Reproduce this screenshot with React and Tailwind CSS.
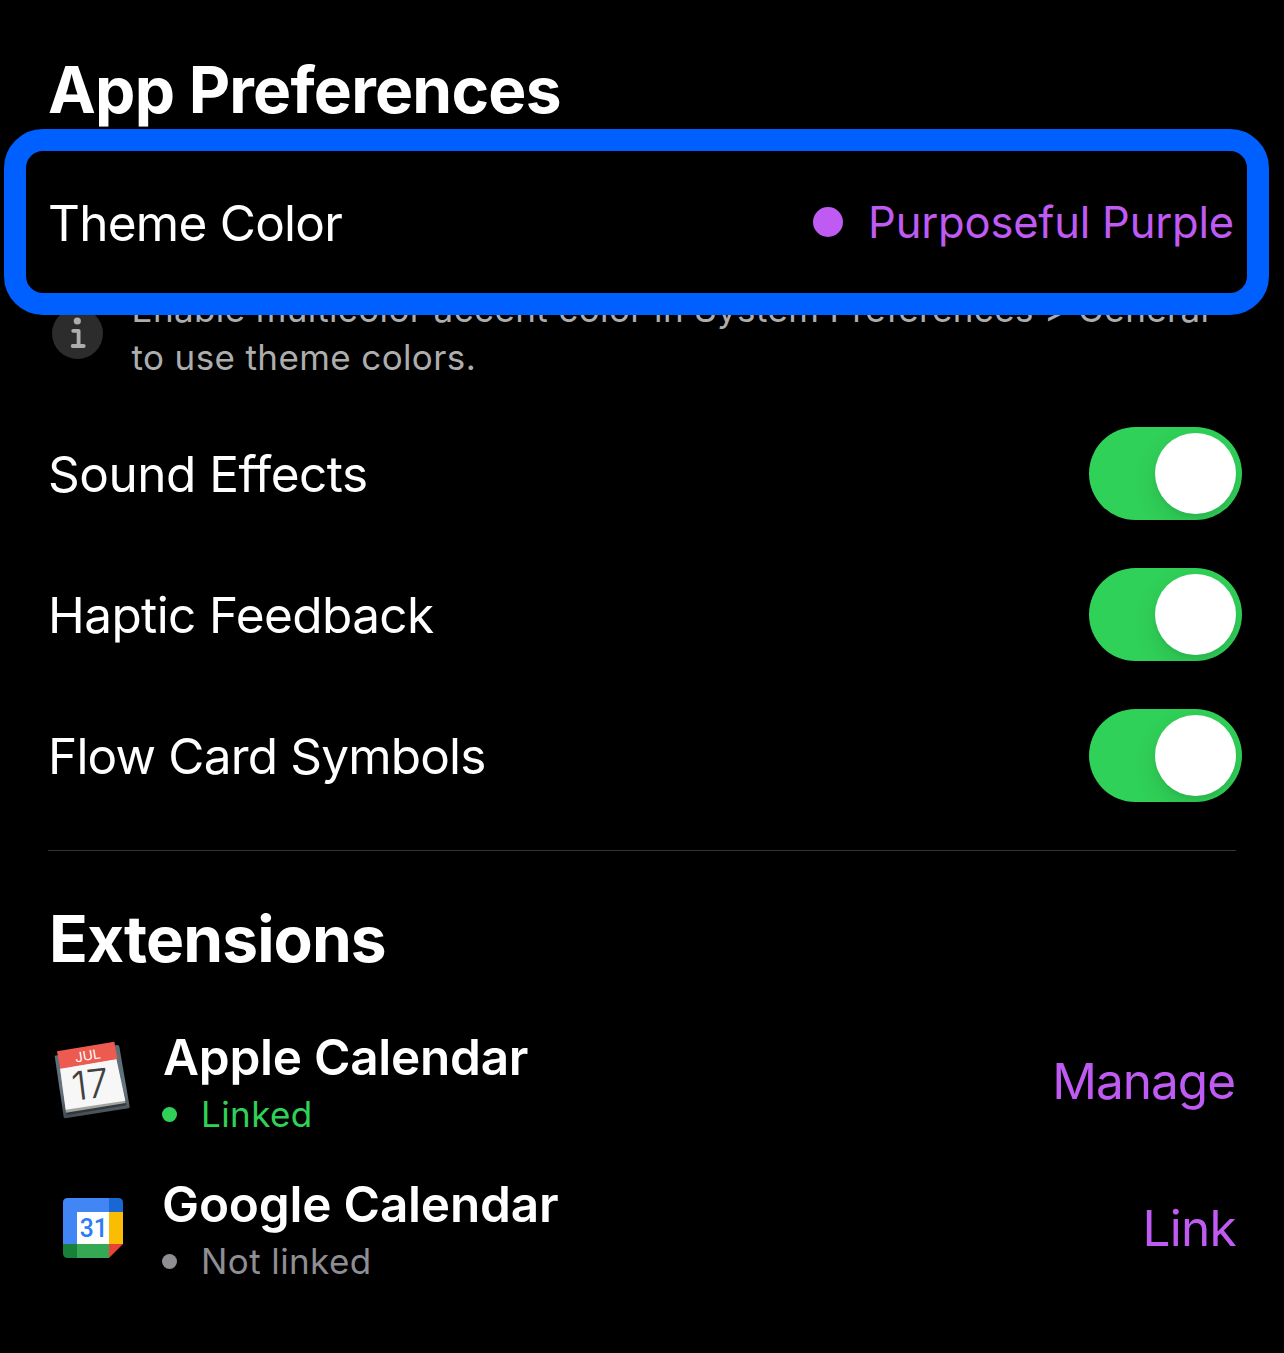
import React from "react";

function Toggle() {
  return (
    <button
      type="button"
      role="switch"
      aria-checked="true"
      className="-mr-1.5 flex h-[93px] w-[153px] items-center justify-end overflow-hidden rounded-full bg-[#30d158] pr-1.5"
    >
      <span className="size-[81px] rounded-full bg-white shadow-[0_9px_24px_rgba(0,0,0,0.12),0_3px_3px_rgba(0,0,0,0.04)]" />
    </button>
  );
}

function ToggleRow({ label, tracking }) {
  return (
    <div className="flex h-[141px] items-center justify-between">
      <span className={`pt-0.5 text-[49.5px] ${tracking}`}>{label}</span>
      <Toggle />
    </div>
  );
}

function InfoIcon() {
  return (
    <svg viewBox="0 0 51 51" className="ml-1 mt-[23px] size-[51px] shrink-0">
      <circle cx="25.5" cy="25.5" r="25.5" fill="#2c2c2c" />
      <circle cx="25.3" cy="13" r="3.6" fill="#adadad" />
      <path d="M21.2 22.8H26.6V38M20.7 38H31.7" fill="none" stroke="#adadad" strokeWidth="3.8" strokeLinecap="round" strokeLinejoin="round" />
    </svg>
  );
}

function AppleCalendarIcon() {
  return (
    <svg viewBox="36 64 240 240" className="size-20 shrink-0">
      <defs>
        <linearGradient id="board" x1="0" y1="0" x2="0" y2="1">
          <stop offset="0" stopColor="#5a6a74" />
          <stop offset="0.6" stopColor="#667681" />
          <stop offset="1" stopColor="#414b52" />
        </linearGradient>
      </defs>
      <path d="M44 108L231 76Q237 75 238 81L269 261Q269 265 265 266L76 296Q72 296 71 292Z" fill="url(#board)" />
      <path d="M60 148L229 118L259 257L79 287Z" fill="#34383b" />
      <path d="M60 148L229 118L257 250L78 279Z" fill="#a3a3a0" />
      <path d="M60 146L229 117L256 243L77 270Z" fill="#f7f7f7" />
      <path d="M51 95L223 66L232 118L61 147Z" fill="#ec5a50" />
      <g transform="rotate(-9.6 143 107)">
        <text x="143" y="122" textAnchor="middle" fontSize="40" textLength="78" lengthAdjust="spacingAndGlyphs" fill="#fff" className="font-['Inter'] font-normal">JUL</text>
      </g>
      <g transform="rotate(-7 149 193)">
        <text x="151" y="237" textAnchor="middle" fontSize="119" textLength="112" lengthAdjust="spacingAndGlyphs" fill="#414141" className="font-['Inter'] font-light">17</text>
      </g>
    </svg>
  );
}

function GoogleCalendarIcon() {
  return (
    <svg viewBox="0 0 180 180" className="mb-px ml-[11px] size-[60px] shrink-0">
      <path d="M14 0H138V42H42V138H0V14Q0 0 14 0Z" fill="#4285f4" />
      <path d="M138 0H166Q180 0 180 14V42H138Z" fill="#1967d2" />
      <path d="M138 42H180V138H138Z" fill="#fbbc04" />
      <path d="M42 138H138V180H42Z" fill="#34a853" />
      <path d="M0 138H42V180H14Q0 180 0 166Z" fill="#188038" />
      <path d="M138 138H180L138 180Z" fill="#ea4335" />
      <path d="M42 42H138V138H42Z" fill="#fff" />
      <text x="92" y="118" textAnchor="middle" fontSize="76" textLength="84" lengthAdjust="spacingAndGlyphs" fill="#2b7df5" className="font-['Roboto'] font-medium">31</text>
    </svg>
  );
}

function ExtensionRow({ icon, name, nameClass, status, dotClass, statusClass, action, actionClass }) {
  return (
    <div className="flex h-[109px] items-center">
      <div className="ml-1 flex h-[81px] w-20 shrink-0 items-center pb-px">{icon}</div>
      <div className="ml-[30px] flex grow flex-col gap-[5px]">
        <div className={`text-[49.5px]/[60px] font-semibold ${nameClass}`}>{name}</div>
        <div className={`flex items-center text-[35px]/[44px] tracking-[0.4px] ${statusClass}`}>
          <span className={`mr-6 size-[15px] rounded-full ${dotClass}`} />
          {status}
        </div>
      </div>
      <button type="button" className={`text-[49.5px] text-[#bf5af2] ${actionClass}`}>{action}</button>
    </div>
  );
}

export default function App() {
  return (
    <main className="h-[1353px] w-full overflow-hidden bg-black px-12 pt-[50px] font-['Inter',sans-serif] text-white">
      <section>
        <h1 className="h-20 text-[64px]/[80px] font-bold tracking-[-0.75px]">App Preferences</h1>
        <div className="relative mt-[30px] flex h-[125px] items-center justify-between">
          <div className="pointer-events-none absolute -left-11 -top-[31px] h-[186px] w-[1265px] rounded-[39px] border-[22px] border-[#0060ff]" />
          <span className="pt-0.5 text-[49.5px] tracking-[-0.75px]">Theme Color</span>
          <div className="mr-0.5 flex items-center text-[43.5px] tracking-[-0.2px] text-[#bf5af2]">
            <span className="mb-0.5 mr-[25px] size-[30px] rounded-full bg-[#bf5af2]" />
            Purposeful Purple
          </div>
        </div>
        <div className="mb-[22px] flex h-24 items-start">
          <InfoIcon />
          <p className="ml-[28.5px] whitespace-nowrap text-[35px]/[48px] tracking-[0.38px] text-[#adadad]">
            Enable multicolor accent color in System Preferences &gt; General
            <br />
            to use theme colors.
          </p>
        </div>
        <ToggleRow label="Sound Effects" tracking="tracking-[-0.5px]" />
        <ToggleRow label="Haptic Feedback" tracking="tracking-[-0.6px]" />
        <ToggleRow label="Flow Card Symbols" tracking="tracking-[-0.82px]" />
      </section>
      <section className="mt-6 border-t border-[#343434] pt-12">
        <h2 className="ml-px h-20 text-[64px]/[80px] font-bold tracking-[-0.9px]">Extensions</h2>
        <div className="mt-12 flex flex-col gap-[38px]">
          <ExtensionRow
            icon={<AppleCalendarIcon />}
            name="Apple Calendar"
            nameClass="tracking-[-0.26px] ml-px"
            status="Linked"
            dotClass="bg-[#30d158]"
            statusClass="text-[#30d158]"
            action="Manage"
            actionClass="tracking-[-1px] mr-px"
          />
          <ExtensionRow
            icon={<GoogleCalendarIcon />}
            name="Google Calendar"
            nameClass="tracking-[-0.2px]"
            status="Not linked"
            dotClass="bg-[#8e8e93]"
            statusClass="text-[#8e8e93]"
            action="Link"
            actionClass="tracking-[-0.7px]"
          />
        </div>
      </section>
    </main>
  );
}
